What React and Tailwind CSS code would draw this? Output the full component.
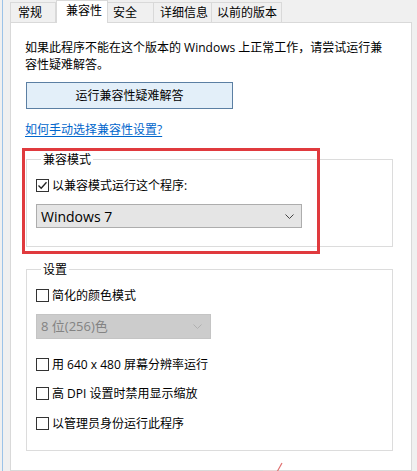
import React from 'react'

const font = "font-['Open_Sans','Noto_Sans_CJK_SC',sans-serif]"

const tabs = [
  { label: '常规', w: 'w-[46px]', pl: 'pl-[7px]' },
  { label: '兼容性', w: 'w-[52px]', pl: 'pl-[9px]', active: true },
  { label: '安全', w: 'w-[47px]', pl: 'pl-[5px]' },
  { label: '详细信息', w: 'w-[59px]', pl: 'pl-[6px]' },
  { label: '以前的版本', w: 'w-[71px]', pl: 'pl-[5px]' },
]

function Chevron({ color = '#333' }) {
  return (
    <svg width="9" height="5" viewBox="0 0 9 5" className="shrink-0">
      <polyline points="0.5,0.5 4.5,4.5 8.5,0.5" fill="none" stroke={color} strokeWidth="1" />
    </svg>
  )
}

function Checkbox({ checked, label }) {
  return (
    <div className="flex items-center h-[17px] leading-[17px]">
      <span className="w-[13px] h-[13px] border border-[#333] bg-white flex items-center justify-center shrink-0">
        {checked && (
          <svg width="11" height="11" viewBox="0 0 11 11">
            <polyline points="1.5,5.5 4.2,8.3 9.5,2.2" fill="none" stroke="#222" strokeWidth="1.3" />
          </svg>
        )}
      </span>
      <span className="ml-[3px] text-[12px] text-black whitespace-nowrap">{label}</span>
    </div>
  )
}

export default function App() {
  return (
    <div className={`w-[417px] h-[471px] bg-[#f0f0f0] flex overflow-hidden ${font}`}>
      {/* 左侧蓝线 */}
      <div className="w-[2px] shrink-0" />
      <div className="w-px bg-[#9cc3e8] shrink-0" />
      <div className="w-[7px] shrink-0" />

      <div className="w-[402px] flex flex-col shrink-0">
        {/* 标签页 */}
        <div className="h-[22px] flex items-end">
          {tabs.map((t) =>
            t.active ? (
              <div
                key={t.label}
                className={`${t.w} ${t.pl} h-[23px] -mb-px relative z-10 bg-white border-t border-l border-r border-[#d9d9d9] text-[12px] leading-[20px] text-black whitespace-nowrap`}
              >
                {t.label}
              </div>
            ) : (
              <div
                key={t.label}
                className={`${t.w} ${t.pl} h-[20px] bg-[#f0f0f0] border-t border-l border-r border-[#d9d9d9] -ml-px first:ml-0 text-[12px] leading-[19px] text-black whitespace-nowrap`}
              >
                {t.label}
              </div>
            )
          )}
        </div>

        {/* 内容面板 */}
        <div className="flex-1 relative bg-white border border-[#d9d9d9] pl-[14px]">
          <div className="mt-[16px] text-[12px] leading-[17px] text-black whitespace-nowrap">
            <div>如果此程序不能在这个版本的 Windows 上正常工作，请尝试运行兼</div>
            <div>容性疑难解答。</div>
          </div>

          <button className="mt-[9px] ml-px w-[207px] h-[27px] bg-[#e3eff9] border border-[#5b7fa3] text-[12px] text-black flex items-center justify-center">
            运行兼容性疑难解答
          </button>

          <div className="mt-[12px] text-[12px] leading-[17px] text-[#0066cc] underline underline-offset-2">
            如何手动选择兼容性设置?
          </div>

          <fieldset className="mt-[13px] ml-px w-[367px] border border-[#dcdcdc] pl-[9px] pb-[18px]">
            <legend className="ml-[5px] px-[2px] text-[12px] leading-[17px] text-black">兼容模式</legend>
            <div className="mt-[9px]">
              <Checkbox checked label="以兼容模式运行这个程序:" />
            </div>
            <div className="mt-[10px] w-[266px] h-[24px] bg-[#e5e5e5] border border-[#adadad] flex items-center justify-between pl-[4px] pr-[7px]">
              <span className="text-[14px] text-black">Windows 7</span>
              <Chevron color="#444" />
            </div>
          </fieldset>

          <fieldset className="mt-[14px] ml-px w-[367px] border border-[#dcdcdc] pl-[9px] pb-[18px]">
            <legend className="ml-[5px] px-[2px] text-[12px] leading-[17px] text-black">设置</legend>
            <div className="mt-[9px]">
              <Checkbox label="简化的颜色模式" />
            </div>
            <div className="mt-[10px] w-[175px] h-[25px] bg-[#cccccc] border border-[#c4c4c4] flex items-center justify-between pl-[4px] pr-[8px]">
              <span className="text-[13px] text-[#838383]">8 位(256)色</span>
              <Chevron color="#b0b0b0" />
            </div>
            <div className="mt-[17px]">
              <Checkbox label="用 640 x 480 屏幕分辨率运行" />
            </div>
            <div className="mt-[12px]">
              <Checkbox label="高 DPI 设置时禁用显示缩放" />
            </div>
            <div className="mt-[13px]">
              <Checkbox label="以管理员身份运行此程序" />
            </div>
          </fieldset>

          {/* 红色标注框 */}
          <div className="absolute left-[11px] top-[125px] w-[298px] h-[106px] border-[3px] border-[#e03a3e] pointer-events-none" />

          {/* 底部红色标记 */}
          <svg className="absolute left-[250px] top-[439px]" width="30" height="12" viewBox="0 0 30 12">
            <line x1="21" y1="1" x2="16" y2="10" stroke="#e07070" strokeWidth="1.2" />
            <line x1="2" y1="9" x2="15" y2="9" stroke="#f5d5d5" strokeWidth="1" />
          </svg>
        </div>
      </div>
    </div>
  )
}
